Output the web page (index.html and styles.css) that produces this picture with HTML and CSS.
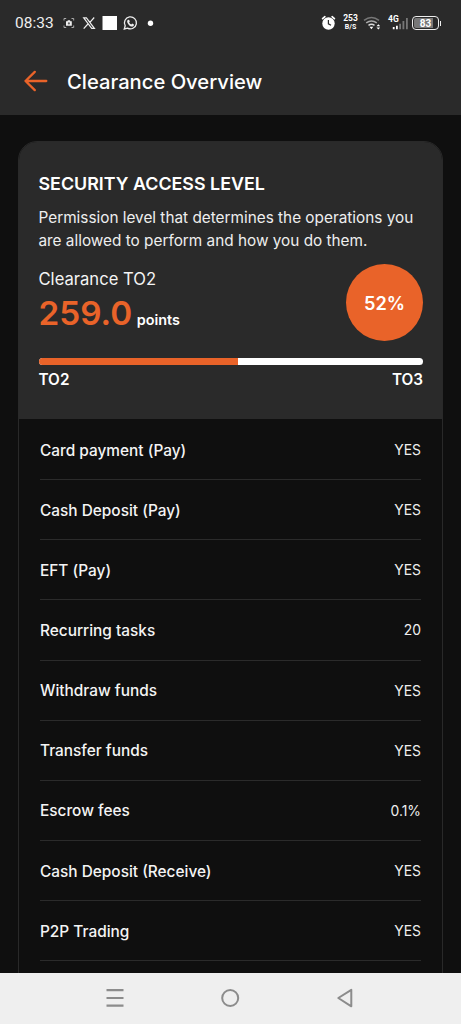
FILE: index.html
```html
<!DOCTYPE html>
<html lang="en">
<head>
<meta charset="utf-8">
<title>Clearance Overview</title>
<link rel="stylesheet" href="styles.css">
</head>
<body>
<div class="screen">
  <div class="status">
    <span class="clock">08:33</span>
    <svg class="status-left" width="100" height="20" viewBox="60 13 100 20">
      <g fill="none" stroke="#aaa" stroke-width="1">
        <path d="M64 20.500v-2h2.200M71.500 18.500h2.200v2M64 25.500v2h2.200M71.500 27.500h2.200v-2"/>
      </g>
      <path fill="#eee" d="M66 21.200h1.300l.6-1h2l.6 1h1.300v4.600H66z"/>
      <circle cx="68.900" cy="23.400" r="1.100" fill="#666"/>
      <path fill="none" stroke="#eee" stroke-width="1.200" d="M83.700 17.800h2.700l8 10.600h-2.700zM94.200 17.500l-4.700 5.300M87.900 24l-4.200 4.700"/>
      <path fill="#fff" d="M102.500 16h14.500v14h-14.500z"/>
      <path fill="none" stroke="#eee" stroke-width="1.300" d="M124.300 29l.9-3.200a6 6 0 1 1 2.300 2.300z"/>
      <path fill="#eee" d="M127.700 20.100q.9-.9 1.500 0l.6 1.400-.7 1q.8 1.500 2.200 2.100l.9-1 1.700.9q.4.700-.5 1.500c-1.200 1.100-3.100.3-4.500-1.100-1.600-1.600-2.400-3.600-1.200-4.800z"/>
      <circle cx="150.500" cy="23.200" r="2.700" fill="#fff"/>
    </svg>
    <svg class="alarm" width="15" height="17" viewBox="321 14 15 17">
      <circle cx="328.500" cy="23.500" r="6.200" fill="#fff"/>
      <path fill="none" stroke="#fff" stroke-width="1.700" stroke-linecap="round" d="M322.600 18.700l2.300-2M334.400 18.700l-2.300-2"/>
      <path fill="none" stroke="#2a2a2a" stroke-width="1.200" d="M328.400 20v3.800l2.600 1.500"/>
    </svg>
    <span class="rate"><span>253</span><span>B/S</span></span>
    <svg class="wifi" width="17" height="16" viewBox="363 16 17 16">
      <g fill="none" stroke-width="1.500">
        <path stroke="#777" d="M364 20.300q7.500-5.500 15 0"/>
        <path stroke="#aaa" d="M366.200 22.900q5.300-3.900 10.600 0"/>
        <path stroke="#ddd" d="M368.500 25.300q3-2 6 0"/>
      </g>
      <path fill="#fff" d="M369.500 26.800h3.800l-1.900 2.500zM376.500 26.200l1.900-2 1.900 2zM376.500 27.400h3.800l-1.900 2z"/>
    </svg>
    <span class="mobile">
      <svg width="22" height="16" viewBox="387 16 22 16">
        <g fill="#fff"><path d="M391.800 27h1.800v2.200h-1.800zM395 25.800h1.800v3.400H395z"/></g>
        <path fill="#777" d="M398.200 23.800h1.800v5.400h-1.800zM401.500 21h1.800v8.200h-1.800zM405 18h1.800v11.200H405z"/>
      </svg>
      <span class="network">4G</span>
    </span>
    <span class="battery"><span class="charge">83</span></span>
    <span class="battery-tip"></span>
  </div>

  <header class="toolbar">
    <svg width="26" height="24" viewBox="0 0 26 24" fill="none" stroke="#e96329" stroke-width="2.300" stroke-linecap="round" stroke-linejoin="round">
      <path d="M23.300 12H2.500M11.800 2.900 2.500 12l9.300 9.100"/>
    </svg>
    <h1 class="title">Clearance Overview</h1>
  </header>

  <main class="content">
    <section class="card">
      <div class="summary">
        <h2 class="heading">SECURITY ACCESS LEVEL</h2>
        <p class="desc">Permission level that determines the operations you<br>are allowed to perform and how you do them.</p>
        <div class="level">
          <div>
            <div class="tier">Clearance TO2</div>
            <div class="score"><span class="value">259.0</span><span class="unit">points</span></div>
          </div>
          <div class="percent">52%</div>
        </div>
        <div class="track"><div class="fill" style="width:52%"></div></div>
        <div class="ends"><span>TO2</span><span>TO3</span></div>
      </div>
      <div class="rows">
        <div class="row"><span>Card payment (Pay)</span><span class="answer">YES</span></div>
        <div class="row"><span>Cash Deposit (Pay)</span><span class="answer">YES</span></div>
        <div class="row"><span>EFT (Pay)</span><span class="answer">YES</span></div>
        <div class="row"><span>Recurring tasks</span><span class="answer">20</span></div>
        <div class="row"><span>Withdraw funds</span><span class="answer">YES</span></div>
        <div class="row"><span>Transfer funds</span><span class="answer">YES</span></div>
        <div class="row"><span>Escrow fees</span><span class="answer">0.1%</span></div>
        <div class="row"><span>Cash Deposit (Receive)</span><span class="answer">YES</span></div>
        <div class="row"><span>P2P Trading</span><span class="answer">YES</span></div>
      </div>
    </section>
  </main>

  <nav class="navbar">
    <svg width="20" height="20" viewBox="0 0 20 20" fill="none" stroke="#8c8c8c" stroke-width="2.200"><path d="M1.500 2.200h17M1.500 10h17M1.500 17.700h17"/></svg>
    <svg width="20" height="20" viewBox="0 0 20 20" fill="none" stroke="#8c8c8c" stroke-width="2"><circle cx="10.200" cy="10" r="8"/></svg>
    <svg width="20" height="20" viewBox="0 0 20 20" fill="none" stroke="#8c8c8c" stroke-width="2" stroke-linejoin="round"><path d="M16.300 1.800v16.500L3.300 10z"/></svg>
  </nav>
</div>
</body>
</html>
```
FILE: styles.css
```css
* { box-sizing: border-box; }
body {
  margin: 0;
  background: #0f0f0f;
  color: #fff;
  font-family: Inter, "Liberation Sans", sans-serif;
}
.screen {
  display: flex;
  flex-direction: column;
  width: 461px;
  height: 1024px;
  overflow: hidden;
}
.status {
  display: flex;
  flex: none;
  height: 48px;
  padding: 0 20px 0 15px;
  background: #2a2a2a;
  font-family: Roboto, sans-serif;
}
.clock {
  width: 45px;
  padding-top: 14px;
  font-size: 15.500px;
  line-height: 19px;
  color: #eee;
}
.status-left { margin-top: 13px; }
.alarm { margin: 14px 7px 0 161px; }
.rate {
  display: flex;
  flex-direction: column;
  align-items: center;
  width: 15px;
  margin: 14px 5px 0 0;
  font-size: 8.500px;
  font-weight: 700;
  line-height: 9px;
}
.rate span:last-child { font-size: 7px; line-height: 8px; }
.wifi { margin-top: 16px; }
.mobile {
  position: relative;
  width: 22px;
  height: 16px;
  margin: 16px 2px 0 8px;
}
.mobile svg { display: block; }
.network {
  position: absolute;
  top: -1px;
  left: 0;
  font-size: 8.500px;
  font-weight: 700;
  line-height: 9px;
}
.battery {
  width: 27px;
  height: 14px;
  margin-top: 16px;
  padding: 1px;
  border: 1.500px solid #eee;
  border-radius: 4px;
}
.charge {
  display: block;
  height: 10px;
  border-radius: 2px;
  background: linear-gradient(90deg, #777 83%, #2a2a2a 83%);
  font-size: 10px;
  font-weight: 700;
  line-height: 11px;
  text-align: center;
}
.battery-tip {
  width: 1px;
  height: 5px;
  margin: 21px 0 0 1px;
  background: #eee;
}
.toolbar {
  display: flex;
  flex: none;
  gap: 18px;
  height: 67px;
  padding: 21px 0 0 23px;
  background: #2a2a2a;
}
.title {
  margin: 0;
  font-size: 20.200px;
  font-weight: 500;
  line-height: 25px;
}
.content {
  flex: 1;
  min-height: 0;
  padding: 26px 18px 0;
  overflow: hidden;
}
.card {
  height: 900px;
  border: 1px solid #292929;
  border-radius: 19px;
  overflow: hidden;
}
.summary {
  height: 276.500px;
  padding: 31px 19px 0 19.500px;
  background: #2a2a2a;
}
.heading {
  margin: 0 0 11px;
  font-size: 17.850px;
  font-weight: 600;
  line-height: 22px;
}
.desc {
  margin: 0;
  font-size: 15.330px;
  line-height: 23px;
  color: #eee;
  white-space: nowrap;
}
.level {
  display: flex;
  justify-content: space-between;
  height: 106px;
  padding-top: 12px;
}
.tier {
  padding-top: 5px;
  font-size: 16.600px;
  line-height: 20px;
  color: #f4f4f4;
}
.score {
  display: flex;
  align-items: baseline;
  gap: 4.500px;
  line-height: 49px;
}
.value {
  color: #e96329;
  font-size: 33.300px;
  font-weight: 600;
}
.unit { font-size: 14.400px; font-weight: 600; }
.percent {
  display: grid;
  place-items: center;
  width: 77px;
  height: 77px;
  border-radius: 50%;
  background: #e96329;
  font-size: 18.200px;
  font-weight: 600;
}
.track {
  height: 7px;
  border-radius: 3.500px;
  background: #fff;
  overflow: hidden;
}
.fill { height: 7px; background: #e96329; }
.ends {
  display: flex;
  justify-content: space-between;
  padding-top: 5px;
  font-size: 15.300px;
  font-weight: 600;
  line-height: 19px;
}
.rows { padding: 1.500px 21px 0; }
.row {
  display: flex;
  align-items: center;
  justify-content: space-between;
  height: 60.150px;
  padding-top: 1px;
  border-bottom: 1px solid #2b2b2b;
  font-size: 15.400px;
  font-weight: 500;
  color: #f4f4f4;
}
.answer { font-size: 13.900px; font-weight: 400; color: #eee; }
.navbar {
  display: grid;
  grid-template-columns: repeat(3, 20px);
  column-gap: 95px;
  justify-content: center;
  flex: none;
  height: 51px;
  padding: 15px 1px 0 0;
  background: #efefef;
}
```
